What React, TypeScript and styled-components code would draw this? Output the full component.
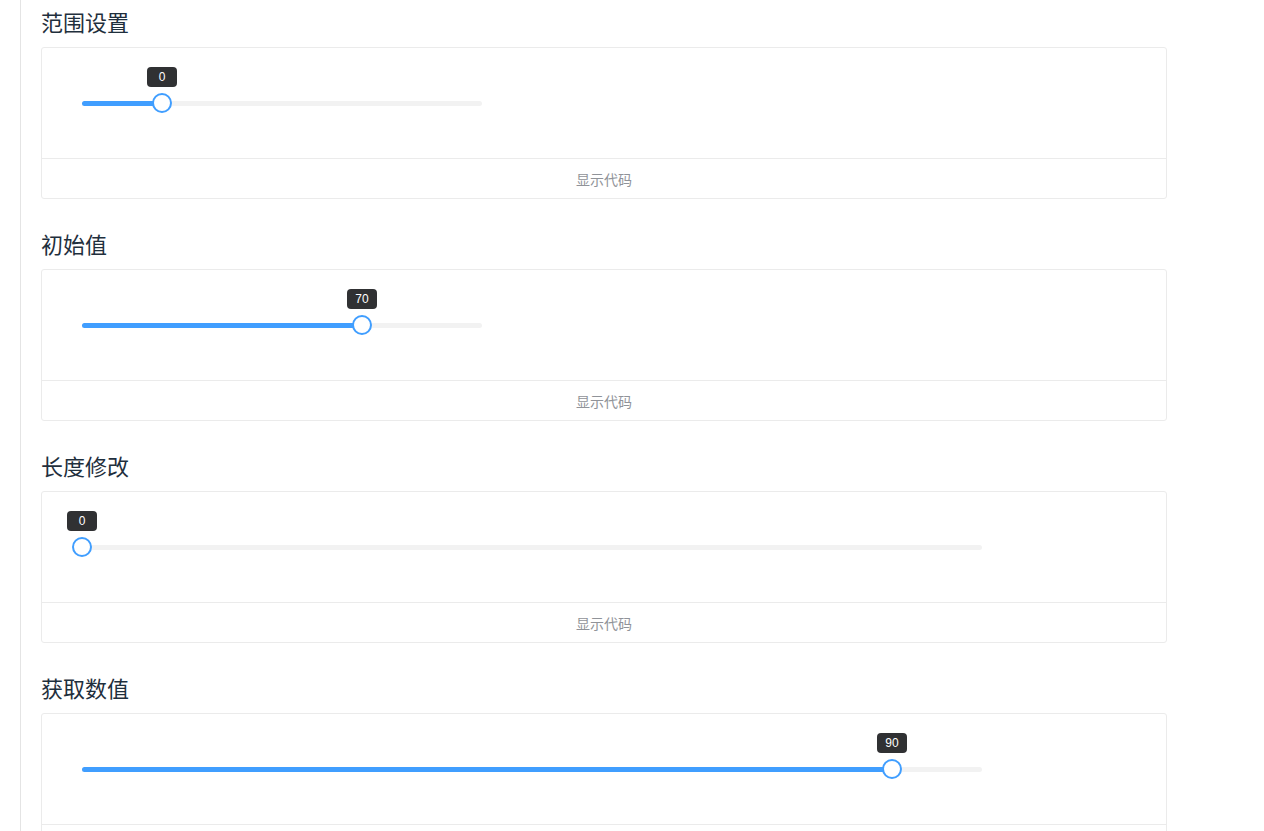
import React from "react";
import styled, { createGlobalStyle } from "styled-components";

const GlobalStyle = createGlobalStyle`
  html, body {
    margin: 0;
    padding: 0;
    background: #ffffff;
    font-family: "Noto Sans CJK SC", "Noto Sans", "Liberation Sans", sans-serif;
  }
`;

const Page = styled.div`
  padding-left: 20px;
`;

const Content = styled.main`
  border-left: 1px solid #e4e4e4;
  padding: 5px 0 0 20px;
  width: 1126px;
`;

const Section = styled.section`
  display: flex;
  flex-direction: column;
  margin-bottom: 28px;
`;

const Title = styled.h3`
  margin: 0 0 9px;
  font-size: 22px;
  font-weight: 400;
  line-height: 33px;
  height: 33px;
  color: #1f2f3d;
`;

const Card = styled.div`
  border: 1px solid #ebebeb;
  border-radius: 3px;
  display: flex;
  flex-direction: column;
`;

const Demo = styled.div`
  padding: 40px 40px;
`;

const Footer = styled.div`
  border-top: 1px solid #ebebeb;
  height: 39px;
  display: flex;
  align-items: center;
  justify-content: center;
  font-size: 14px;
  color: #909399;
`;

const SliderWrap = styled.div<{ $w: number }>`
  width: ${(p) => p.$w}px;
  height: 30px;
  display: flex;
  align-items: center;
`;

const Track = styled.div`
  position: relative;
  width: 100%;
  height: 5px;
  border-radius: 3px;
  background: #f2f2f2;
`;

const Fill = styled.div`
  height: 100%;
  border-radius: 3px;
  background: #409eff;
`;

const Handle = styled.div`
  position: absolute;
  top: 50%;
  width: 16px;
  height: 16px;
  margin: -10px 0 0 -10px;
  border: 2px solid #409eff;
  border-radius: 50%;
  background: #fff;
`;

const Tip = styled.div`
  position: absolute;
  bottom: 24px;
  left: 50%;
  transform: translateX(-50%);
  min-width: 16px;
  height: 20px;
  padding: 0 7px;
  border-radius: 4px;
  background: #303133;
  color: #fff;
  font-family: "Liberation Sans", Arial, sans-serif;
  font-size: 12px;
  line-height: 20px;
  text-align: center;
  white-space: nowrap;
`;

type SliderProps = { width: number; pct: number; label: string };

const Slider = ({ width, pct, label }: SliderProps) => (
  <SliderWrap $w={width}>
    <Track>
      <Fill style={{ width: `${pct}%` }} />
      <Handle style={{ left: `${pct}%` }}>
        <Tip>{label}</Tip>
      </Handle>
    </Track>
  </SliderWrap>
);

const demos = [
  { title: "范围设置", width: 400, pct: 20, label: "0" },
  { title: "初始值", width: 400, pct: 70, label: "70" },
  { title: "长度修改", width: 900, pct: 0, label: "0" },
  { title: "获取数值", width: 900, pct: 90, label: "90" },
];

export default function App() {
  return (
    <>
      <GlobalStyle />
      <Page>
        <Content>
          {demos.map((d) => (
            <Section key={d.title}>
              <Title>{d.title}</Title>
              <Card>
                <Demo>
                  <Slider width={d.width} pct={d.pct} label={d.label} />
                </Demo>
                <Footer>显示代码</Footer>
              </Card>
            </Section>
          ))}
        </Content>
      </Page>
    </>
  );
}
